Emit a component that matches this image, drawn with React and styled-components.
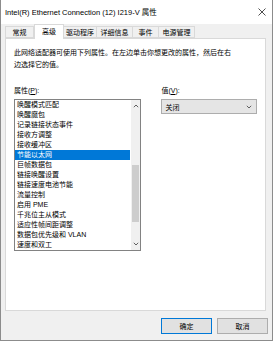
import React from 'react'
import styled, { createGlobalStyle } from 'styled-components'

const GlobalStyle = createGlobalStyle`
  body {
    margin: 0;
    background: #fff;
    font-family: "Liberation Sans", "Noto Sans CJK SC", sans-serif;
    font-size: 7px;
    color: #000;
  }
`

const Window = styled.div`
  width: 273px;
  height: 341px;
  box-sizing: border-box;
  border: 1px solid #8c8c8c;
  border-top: none;
  background: #f0f0f0;
  display: flex;
  flex-direction: column;
`

const TitleBar = styled.div`
  height: 23px;
  background: #fff;
  display: flex;
  align-items: center;
  justify-content: space-between;
  padding: 0 5px 1px 4px;
  font-size: 7.5px;
`

const Close = styled.svg`
  width: 8px;
  height: 8px;
  margin-right: 1px;
`

const TabStrip = styled.div`
  height: 14px;
  display: flex;
  align-items: flex-end;
  padding-left: 4px;
`

const Tab = styled.div`
  box-sizing: border-box;
  width: ${p => p.$w}px;
  height: ${p => (p.$active ? 15 : 12)}px;
  margin-bottom: ${p => (p.$active ? -1 : 0)}px;
  position: relative;
  z-index: ${p => (p.$active ? 1 : 0)};
  background: ${p => (p.$active ? '#fff' : '#f0f0f0')};
  border: 1px solid #d9d9d9;
  border-bottom: ${p => (p.$active ? 'none' : '1px solid #d9d9d9')};
  border-left: ${p => (p.$first || p.$active ? '1px solid #d9d9d9' : 'none')};
  display: flex;
  align-items: center;
  justify-content: center;
  padding-bottom: ${p => (p.$active ? 2 : 0)}px;
  white-space: nowrap;
`

const Panel = styled.div`
  height: 273px;
  margin: 0 6px 0 4px;
  box-sizing: border-box;
  background: #fff;
  border: 1px solid #d9d9d9;
  padding: 8px 8px 0 8px;
`

const Description = styled.p`
  margin: 0;
  width: 222px;
  line-height: 12px;
`

const Columns = styled.div`
  display: flex;
  gap: 20px;
  margin-top: 14px;
`

const Column = styled.div`
  width: ${p => p.$w}px;
  display: flex;
  flex-direction: column;
`

const Label = styled.div`
  line-height: 12px;
  height: 12px;
  margin-bottom: 2px;
`

const ListBox = styled.div`
  height: 152px;
  box-sizing: border-box;
  border: 1px solid #828282;
  display: flex;
  overflow: hidden;
`

const Items = styled.div`
  flex: 1;
  display: flex;
  flex-direction: column;
`

const Item = styled.div`
  height: 10px;
  line-height: 10px;
  padding-left: 2px;
  white-space: nowrap;
  background: ${p => (p.$selected ? '#0078d7' : 'transparent')};
  color: ${p => (p.$selected ? '#fff' : '#000')};
  margin-right: 1px;
`

const ScrollBar = styled.div`
  width: 9px;
  background: #f0f0f0;
  display: flex;
  flex-direction: column;
`

const Arrow = styled.div`
  height: 12px;
  display: flex;
  align-items: center;
  justify-content: center;
`

const Track = styled.div`
  flex: 1;
  display: flex;
  flex-direction: column;
`

const Thumb = styled.div`
  margin: 53px 1px 0;
  height: 57px;
  background: #cdcdcd;
`

const Select = styled.div`
  height: 15px;
  box-sizing: border-box;
  border: 1px solid #adadad;
  background: #e5e5e5;
  display: flex;
  align-items: center;
  justify-content: space-between;
  padding: 0 4px 0 3px;
`

const Footer = styled.div`
  display: flex;
  justify-content: flex-end;
  gap: 5px;
  padding: 7px 4px 0 0;
`

const Button = styled.div`
  width: 51px;
  height: 16px;
  box-sizing: border-box;
  border: 1px solid ${p => (p.$default ? '#0078d7' : '#adadad')};
  background: #e1e1e1;
  display: flex;
  align-items: center;
  justify-content: center;
`

const Chevron = ({ up }) => (
  <svg width="6" height="4" viewBox="0 0 6 4">
    <path
      d={up ? 'M0.8 3.2 L3 1 L5.2 3.2' : 'M0.8 0.8 L3 3 L5.2 0.8'}
      fill="none"
      stroke="#606060"
      strokeWidth="1"
    />
  </svg>
)

const tabs = [
  { name: '常规', w: 29 },
  { name: '高级', w: 30, active: true },
  { name: '驱动程序', w: 33 },
  { name: '详细信息', w: 36 },
  { name: '事件', w: 26 },
  { name: '电源管理', w: 36 }
]

const properties = [
  '唤醒模式匹配',
  '唤醒魔包',
  '记录链接状态事件',
  '接收方调整',
  '接收缓冲区',
  '节能以太网',
  '巨帧数据包',
  '链接唤醒设置',
  '链接速度电池节能',
  '流量控制',
  '启用 PME',
  '千兆位主从模式',
  '适应性帧间距调整',
  '数据包优先级和 VLAN',
  '速度和双工'
]

export default function App() {
  return (
    <>
      <GlobalStyle />
      <Window>
        <TitleBar>
          <span>Intel(R) Ethernet Connection (12) I219-V 属性</span>
          <Close viewBox="0 0 8 8">
            <path d="M0.5 0.5 L7.5 7.5 M7.5 0.5 L0.5 7.5" stroke="#222" strokeWidth="0.8" />
          </Close>
        </TitleBar>
        <TabStrip>
          {tabs.map((t, i) => (
            <Tab key={t.name} $w={t.w} $active={t.active} $first={i === 0}>
              {t.name}
            </Tab>
          ))}
        </TabStrip>
        <Panel>
          <Description>
            此网络适配器可使用下列属性。在左边单击你想更改的属性，然后在右边选择它的值。
          </Description>
          <Columns>
            <Column $w={128}>
              <Label>
                属性(<u>P</u>):
              </Label>
              <ListBox>
                <Items>
                  {properties.map(p => (
                    <Item key={p} $selected={p === '节能以太网'}>
                      {p}
                    </Item>
                  ))}
                </Items>
                <ScrollBar>
                  <Arrow>
                    <Chevron up />
                  </Arrow>
                  <Track>
                    <Thumb />
                  </Track>
                  <Arrow>
                    <Chevron />
                  </Arrow>
                </ScrollBar>
              </ListBox>
            </Column>
            <Column $w={96}>
              <Label>
                值(<u>V</u>):
              </Label>
              <Select>
                <span>关闭</span>
                <Chevron />
              </Select>
            </Column>
          </Columns>
        </Panel>
        <Footer>
          <Button $default>确定</Button>
          <Button>取消</Button>
        </Footer>
      </Window>
    </>
  )
}
